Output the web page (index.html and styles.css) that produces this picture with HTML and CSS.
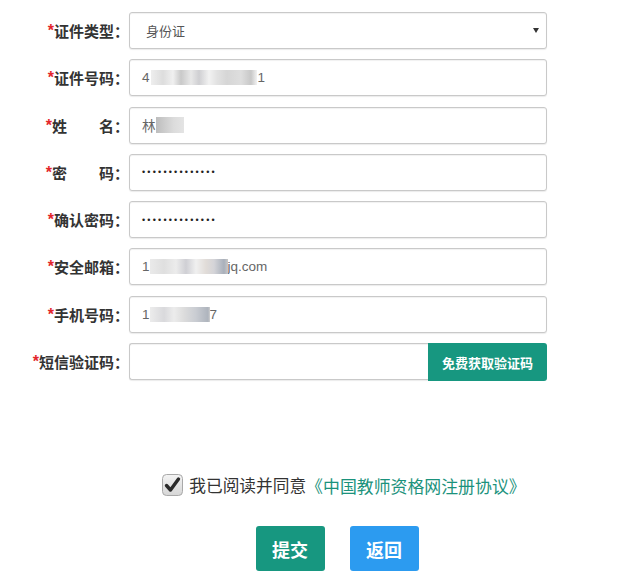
FILE: index.html
```html
<!DOCTYPE html>
<html lang="zh-CN">
<head>
<meta charset="utf-8">
<title>注册</title>
<link rel="stylesheet" href="styles.css">
</head>
<body>
<div class="page">
  <div class="form">
    <div class="row">
      <div class="label"><span class="req">*</span>证件类型：</div>
      <div class="control select"><span class="sel-text">身份证</span><span class="caret"></span></div>
    </div>
    <div class="row">
      <div class="label"><span class="req">*</span>证件号码：</div>
      <div class="control">4<span class="mask m-id"></span>1</div>
    </div>
    <div class="row">
      <div class="label"><span class="req">*</span>姓<span class="sp"></span>名：</div>
      <div class="control">林<span class="mask m-name"></span></div>
    </div>
    <div class="row">
      <div class="label"><span class="req">*</span>密<span class="sp"></span>码：</div>
      <div class="control"><span class="dots">••••••••••••••</span></div>
    </div>
    <div class="row">
      <div class="label"><span class="req">*</span>确认密码：</div>
      <div class="control"><span class="dots">••••••••••••••</span></div>
    </div>
    <div class="row">
      <div class="label"><span class="req">*</span>安全邮箱：</div>
      <div class="control">1<span class="mask m-mail"></span>jq.com</div>
    </div>
    <div class="row">
      <div class="label"><span class="req">*</span>手机号码：</div>
      <div class="control">1<span class="mask m-phone"></span>7</div>
    </div>
    <div class="row">
      <div class="label"><span class="req">*</span>短信验证码：</div>
      <div class="sms">
        <div class="control sms-input"></div>
        <div class="sms-btn">免费获取验证码</div>
      </div>
    </div>
  </div>

  <div class="agree">
    <svg class="check" width="21" height="22" viewBox="0 0 21 22">
      <defs>
        <linearGradient id="cbg" x1="0" y1="0" x2="0" y2="1">
          <stop offset="0" stop-color="#f4f4f4"/>
          <stop offset="1" stop-color="#d6d6d6"/>
        </linearGradient>
      </defs>
      <rect x="0.5" y="0.5" width="20" height="21" rx="4" fill="url(#cbg)" stroke="#a9a9a9"/>
      <path d="M4.5 11.5 L8.5 16 L16.5 5" fill="none" stroke="#2b2b2b" stroke-width="3.4" stroke-linecap="round" stroke-linejoin="round"/>
    </svg>
    <span class="agree-text">我已阅读并同意</span><span class="agree-link">《中国教师资格网注册协议》</span>
  </div>

  <div class="actions">
    <div class="btn btn-submit">提交</div>
    <div class="btn btn-back">返回</div>
  </div>
</div>
</body>
</html>
```
FILE: styles.css
```css
html, body {
  margin: 0;
  padding: 0;
  background: #ffffff;
}
body {
  font-family: "Noto Sans CJK SC", "Liberation Sans", sans-serif;
  color: #333;
}
.page {
  width: 640px;
  height: 581px;
  overflow: hidden;
}
.form {
  padding-top: 12px;
  display: flex;
  flex-direction: column;
  gap: 10.3px;
}
.row {
  display: flex;
  align-items: center;
  height: 37px;
}
.label {
  width: 129px;
  flex: none;
  box-sizing: border-box;
  text-align: right;
  font-size: 15px;
  font-weight: bold;
  color: #333;
  white-space: nowrap;
}
.req {
  color: #e3262b;
  font-weight: bold;
  font-family: "Liberation Sans", sans-serif;
  font-size: 16px;
  margin-right: 0;
  position: relative;
  top: -1px;
}
.sp {
  display: inline-block;
  width: 32px;
}
.control {
  box-sizing: border-box;
  width: 418px;
  height: 37px;
  border: 1px solid #c9c9c9;
  border-radius: 3px;
  box-shadow: inset 0 1px 1px rgba(0,0,0,0.06), 0 1px 1px rgba(0,0,0,0.08);
  background: #fff;
  display: flex;
  align-items: center;
  padding-left: 12px;
  font-family: "Liberation Sans", "Noto Sans CJK SC", sans-serif;
  font-size: 13.5px;
  color: #666;
}
.select {
  padding-left: 16px;
  justify-content: space-between;
  padding-right: 7px;
}
.sel-text {
  font-family: "Noto Sans CJK SC", sans-serif;
  font-size: 13px;
  color: #555;
}
.caret {
  width: 0;
  height: 0;
  border-left: 3.5px solid transparent;
  border-right: 3.5px solid transparent;
  border-top: 5px solid #333;
}
.dots {
  font-family: "Liberation Sans", sans-serif;
  font-size: 9px;
  letter-spacing: 2.2px;
  color: #222;
}
.mask {
  display: inline-block;
  height: 15px;
  filter: blur(0.5px);
}
.m-id {
  width: 106px;
  margin: 0 1px;
  background:
    linear-gradient(90deg, #eee 0, #ddd 12px, #f0f0f0 22px, #c9c9c9 30px, #e8e8e8 40px, #cfcfd2 48px, #f2f2f2 58px, #e2e2e2 66px, #d6d6d6 76px, #dedede 90px, #c8c8c8 100px, #f2f2f2 106px);
}
.m-name {
  width: 28px;
  height: 16px;
  background: linear-gradient(90deg, #bdbdbd 0, #cfcfcf 10px, #dcdcdc 18px, #e4e4e4 28px);
}
.m-mail {
  width: 78px;
  background: linear-gradient(90deg, #eaeaea 0, #dfdfdf 14px, #ececec 26px, #cfcfd4 36px, #f0f0f0 46px, #e1dcd8 56px, #d4d4d8 64px, #a9b0bb 74px, #c8c8c8 78px);
}
.m-phone {
  width: 60px;
  background: linear-gradient(90deg, #ececec 0, #d9d9dc 14px, #ececec 24px, #dcdcdc 34px, #c9ccd2 46px, #aeb4bd 58px, #cfcfcf 60px);
}
.sms {
  display: flex;
  width: 418px;
  height: 37px;
}
.sms-input {
  width: 299px;
  border-radius: 3px 0 0 3px;
  border-right: none;
}
.sms-btn {
  flex: 1;
  background: #179780;
  color: #fff;
  font-size: 13px;
  font-weight: bold;
  display: flex;
  align-items: center;
  justify-content: center;
  border-radius: 0 3px 3px 0;
  height: 38px;
}
.agree {
  margin-top: 93px;
  padding-left: 48px;
  display: flex;
  justify-content: center;
  align-items: center;
  height: 24px;
}
.check {
  display: block;
  margin-right: 6px;
}
.agree-text {
  font-size: 16.7px;
  color: #333;
}
.agree-link {
  font-size: 16.9px;
  color: #1b927c;
}
.actions {
  margin-top: 29px;
  padding-left: 34px;
  display: flex;
  justify-content: center;
  gap: 25px;
}
.btn {
  width: 69px;
  height: 45px;
  border-radius: 3px;
  color: #fff;
  font-size: 18px;
  font-weight: bold;
  display: flex;
  align-items: center;
  justify-content: center;
}
.btn-submit {
  background: #179780;
}
.btn-back {
  background: #2c9bf0;
}
```
